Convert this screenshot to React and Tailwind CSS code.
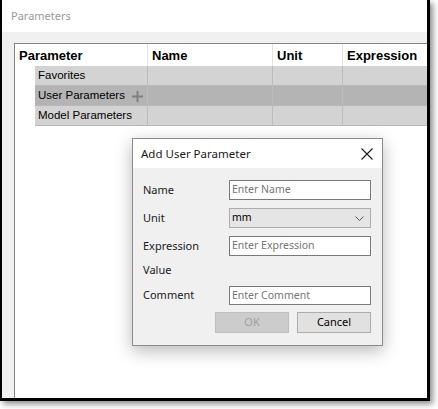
import React from "react";

const seg = { fontFamily: '"Noto Sans", "Open Sans", sans-serif' };
const tah = { fontFamily: '"Liberation Sans", Arial, sans-serif' };

function Row({ label, dark, plus }) {
  const bg = dark ? "bg-[#b4b4b4]" : "bg-[#d3d3d3]";
  return (
    <div className={`ml-[20px] grid grid-cols-[113px_125px_70px_1fr] h-[20px] border-b border-[#b9b9b9] ${bg}`}>
      <div className="border-r border-[#bcbcbc] flex items-center pl-[3px] pt-[1px] text-[11.5px] text-black">
        <span>{label}</span>
        {plus && (
          <svg width="11" height="11" viewBox="0 0 11 11" className="ml-[7px]">
            <rect x="4.5" y="0" width="2" height="11" fill="#808080" />
            <rect x="0" y="4.5" width="11" height="2" fill="#808080" />
          </svg>
        )}
      </div>
      <div className="border-r border-[#bcbcbc]" />
      <div className="border-r border-[#bcbcbc]" />
      <div />
    </div>
  );
}

function Field({ label, children, mt, h = "h-[20px]" }) {
  return (
    <div className={`flex items-center ${h} ${mt}`}>
      <div className="w-[86px] text-[11px] text-[#1a1a1a]">{label}</div>
      {children}
    </div>
  );
}

function TextBox({ placeholder, h = "h-[20px]" }) {
  return (
    <div className={`w-[142px] ${h} bg-white border border-[#7a7a7a] flex items-center pl-[2px] text-[10.5px] text-[#767676]`}>
      {placeholder}
    </div>
  );
}

export default function App() {
  return (
    <div className="w-[438px] h-[409px] bg-white relative overflow-hidden">
      <div className="w-[430px] h-[401px] flex flex-col border-l-2 border-r-[3px] border-b-[3px] border-black shadow-[3px_3px_6px_rgba(0,0,0,0.45)] bg-white">
        <div className="h-[32px] bg-white flex items-center pl-[9px] text-[11px] text-[#9a9a9a] shrink-0" style={seg}>
          Parameters
        </div>
        <div className="flex-1 bg-[#f0f0f0] pt-[11px] pl-[12px] flex min-h-0">
          <div className="flex-1 bg-white border-t border-l border-[#858585]" style={tah}>
            <div className="grid grid-cols-[133px_125px_70px_1fr] h-[22px] text-[13px] font-bold text-black">
              <div className="border-r border-[#e3e3e3] flex items-center pl-[4px] pt-[1px]">Parameter</div>
              <div className="border-r border-[#e3e3e3] flex items-center pl-[4px] pt-[1px]">Name</div>
              <div className="border-r border-[#e3e3e3] flex items-center pl-[4px] pt-[1px]">Unit</div>
              <div className="flex items-center pl-[4px] pt-[1px]">Expression</div>
            </div>
            <Row label="Favorites" />
            <Row label="User Parameters" dark plus />
            <Row label="Model Parameters" />
          </div>
        </div>
      </div>

      <div
        className="absolute left-[132px] top-[138px] w-[251px] h-[208px] border border-[#8c8c8c] bg-[#f0f0f0] flex flex-col shadow-[0_5px_16px_rgba(0,0,0,0.28)]"
        style={seg}
      >
        <div className="h-[29px] bg-white flex items-center justify-between pl-[8px] pr-[9px] shrink-0">
          <span className="text-[11.5px] text-[#1a1a1a]">Add User Parameter</span>
          <svg width="12" height="12" viewBox="0 0 12 12">
            <path d="M0.5 0.5 L11.5 11.5 M11.5 0.5 L0.5 11.5" stroke="#1a1a1a" strokeWidth="1.1" fill="none" />
          </svg>
        </div>
        <div className="flex flex-col pl-[10px] pr-[11px] pt-[12px]">
          <Field label="Name" mt="">
            <TextBox placeholder="Enter Name" />
          </Field>
          <Field label="Unit" mt="mt-[8px]">
            <div className="w-[142px] h-[20px] bg-[#e5e5e5] border border-[#adadad] flex items-center justify-between pl-[2px] pr-[6px] text-[10.5px] text-black">
              <span>mm</span>
              <svg width="9" height="5" viewBox="0 0 9 5">
                <path d="M0.5 0.5 L4.5 4.5 L8.5 0.5" stroke="#555" strokeWidth="1" fill="none" />
              </svg>
            </div>
          </Field>
          <Field label="Expression" mt="mt-[8px]">
            <TextBox placeholder="Enter Expression" />
          </Field>
          <Field label="Value" mt="mt-[4px]">
            <div />
          </Field>
          <Field label="Comment" mt="mt-[6px]" h="h-[19px]">
            <TextBox placeholder="Enter Comment" h="h-[19px]" />
          </Field>
          <div className="flex justify-end gap-[8px] mt-[7px]">
            <div className="w-[74px] h-[21px] bg-[#cccccc] border border-[#bfbfbf] flex items-center justify-center text-[11px] text-[#a0a0a0]">
              OK
            </div>
            <div className="w-[74px] h-[21px] bg-[#e1e1e1] border border-[#adadad] flex items-center justify-center text-[11px] text-black">
              Cancel
            </div>
          </div>
        </div>
      </div>
    </div>
  );
}
